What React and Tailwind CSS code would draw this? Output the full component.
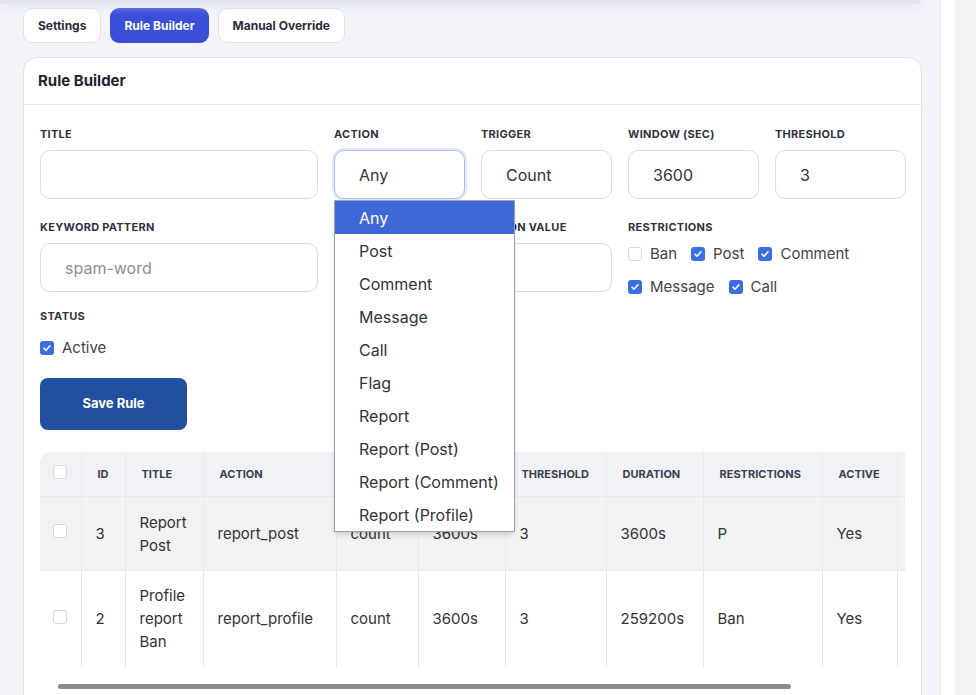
const F = { fontFamily: "Inter, 'Noto Sans', sans-serif" };

function Check({ on }) {
  return on ? (
    <span className="inline-flex w-[14px] h-[14px] rounded-[3px] bg-[#3b6fe0] items-center justify-center">
      <svg width="10" height="10" viewBox="0 0 10 10"><path d="M2 5.2l2 2 4-4.4" stroke="white" strokeWidth="1.6" fill="none" strokeLinecap="round" strokeLinejoin="round"/></svg>
    </span>
  ) : (
    <span className="inline-block w-[14px] h-[14px] rounded-[3px] border border-[#d5d8e0] bg-white" />
  );
}

const Label = ({ children }) => (
  <div className="text-[11px] font-bold text-[#2f3342] tracking-wide h-[18px] leading-[18px] mb-[7px]">{children}</div>
);
const Input = ({ value, ph, focus }) => (
  <div className={`h-[49px] rounded-[10px] border ${focus ? "border-[#a9bdf0] shadow-[0_0_0_2px_#e3eafc]" : "border-[#d9dcea]"} bg-white flex items-center px-6 text-[16px] ${ph ? "text-[#8a8f9c]" : "text-[#333]"}`}>{value || ph}</div>
);

const opts = ["Any","Post","Comment","Message","Call","Flag","Report","Report (Post)","Report (Comment)","Report (Profile)"];
const cols = [["",41],["ID",44],["TITLE",78],["ACTION",133],["TRIGGER",82],["WINDOW",87],["THRESHOLD",101],["DURATION",97],["RESTRICTIONS",119],["ACTIVE",75],["",8]];
const rows = [
  ["3", <>Report<br/>Post</>, "report_post","count","3600s","3","3600s","P","Yes"],
  ["2", <>Profile<br/>report<br/>Ban</>, "report_profile","count","3600s","3","259200s","Ban","Yes"],
];

export default function App() {
  return (
    <div style={F} className="w-[976px] h-[695px] overflow-hidden flex bg-white">
      <div className="w-[940px] bg-[#f3f5fb] pl-[23px] pr-[18px] relative">
        <div className="absolute top-0 left-0 right-[20px] h-[4px] bg-[#e3e5ee] shadow-[0_2px_8px_#d8dbe6]" />
        <div className="flex gap-[9px] pt-[8px]">
          {["Settings","Rule Builder","Manual Override"].map((t,i)=>(
            <div key={t} className={`h-[35px] px-[14px] rounded-[9px] flex items-center text-[12px] font-bold ${i===1?"bg-[#3a4ed8] text-white":"bg-white text-[#2a2d3a] border border-[#dfe2ec]"}`}>{t}</div>
          ))}
        </div>
        <div className="mt-[14px] bg-white rounded-t-[14px] border border-[#e0e3ee] h-[700px]">
          <div className="h-[47px] border-b border-[#e0e3ee] flex items-center px-[14px] text-[15px] font-bold text-[#1f2230]">Rule Builder</div>
          <div className="px-[16px] pt-[20px] relative">
            <div className="grid grid-cols-[131px_131px_131px_131px_131px_131px] gap-x-[16px]">
              <div className="col-span-2"><Label>TITLE</Label><Input /></div>
              <div><Label>ACTION</Label><Input value="Any" focus /></div>
              <div><Label>TRIGGER</Label><Input value="Count" /></div>
              <div><Label>WINDOW (SEC)</Label><Input value="3600" /></div>
              <div><Label>THRESHOLD</Label><Input value="3" /></div>
              <div className="col-span-2 mt-[19px]"><Label>KEYWORD PATTERN</Label><Input ph="spam-word" /></div>
              <div className="mt-[19px]" />
              <div className="mt-[19px]"><Label>ACTION VALUE</Label><Input /></div>
              <div className="col-span-2 mt-[19px]">
                <Label>RESTRICTIONS</Label>
                <div className="flex flex-wrap gap-x-[14px] gap-y-[10px] text-[15px] text-[#444] w-[260px]">
                  {[["Ban",0],["Post",1],["Comment",1],["Message",1],["Call",1]].map(([t,o])=>(
                    <span key={t} className="flex items-center gap-[8px]"><Check on={o}/>{t}</span>
                  ))}
                </div>
              </div>
            </div>
            <div className="mt-[9px]"><div className="text-[11px] font-bold text-[#2f3342] tracking-wide h-[18px] leading-[18px]">STATUS</div>
              <div className="flex items-center gap-[8px] mt-[12px] text-[15px] text-[#444]"><Check on/>Active</div>
            </div>
            <div className="mt-[18px] w-[147px] h-[52px] rounded-[8px] bg-[#1f4f9e] text-white text-[13px] font-bold flex items-center justify-center">Save Rule</div>
            <div className="mt-[22px] overflow-hidden rounded-tl-[10px]">
              <table className="border-collapse text-[15px] text-[#333]">
                <thead><tr className="bg-[#f1f2f6] h-[45px]">
                  {cols.map(([c,w],i)=>(<th key={i} style={{width:w,minWidth:w,maxWidth:w}} className={`text-left ${i===0?"px-[13px]":"px-[16px]"} text-[11px] font-bold text-[#3a3f50] ${i>0?"border-l border-[#e6e8f0]":""}`}>{i===0?<Check/>:c}</th>))}
                </tr></thead>
                <tbody>
                  {rows.map((r,ri)=>(
                    <tr key={ri} className={`${ri===0?"bg-[#f2f2f2] h-[74px]":"bg-white h-[96px]"} border-t border-[#e6e8f0]`}>
                      <td className="px-[13px]"><Check/></td>
                      {r.map((c,ci)=>(<td key={ci} className="px-[14px] border-l border-[#e6e8f0] leading-[23px]">{c}</td>))}
                      <td className="border-l border-[#e6e8f0]"></td>
                    </tr>
                  ))}
                </tbody>
              </table>
            </div>
            <div className="mt-[17px] ml-[18px] w-[733px] h-[5px] rounded bg-[#8d8d8d]" />
            <div className="absolute left-[310px] top-[95px] w-[181px] bg-white border border-[#9aa0ac] shadow-md text-[16px] text-[#333]">
              {opts.map((o,i)=>(
                <div key={o} className={`h-[33px] flex items-center px-[24px] whitespace-nowrap ${i===0?"bg-[#3d68d6] text-white":""}`}>{o}</div>
              ))}
            </div>
          </div>
        </div>
      </div>
      <div className="w-[15px] bg-white border-l border-[#e8eaf2]" />
      <div className="flex-1 bg-[#f3f3f5]" />
    </div>
  );
}
